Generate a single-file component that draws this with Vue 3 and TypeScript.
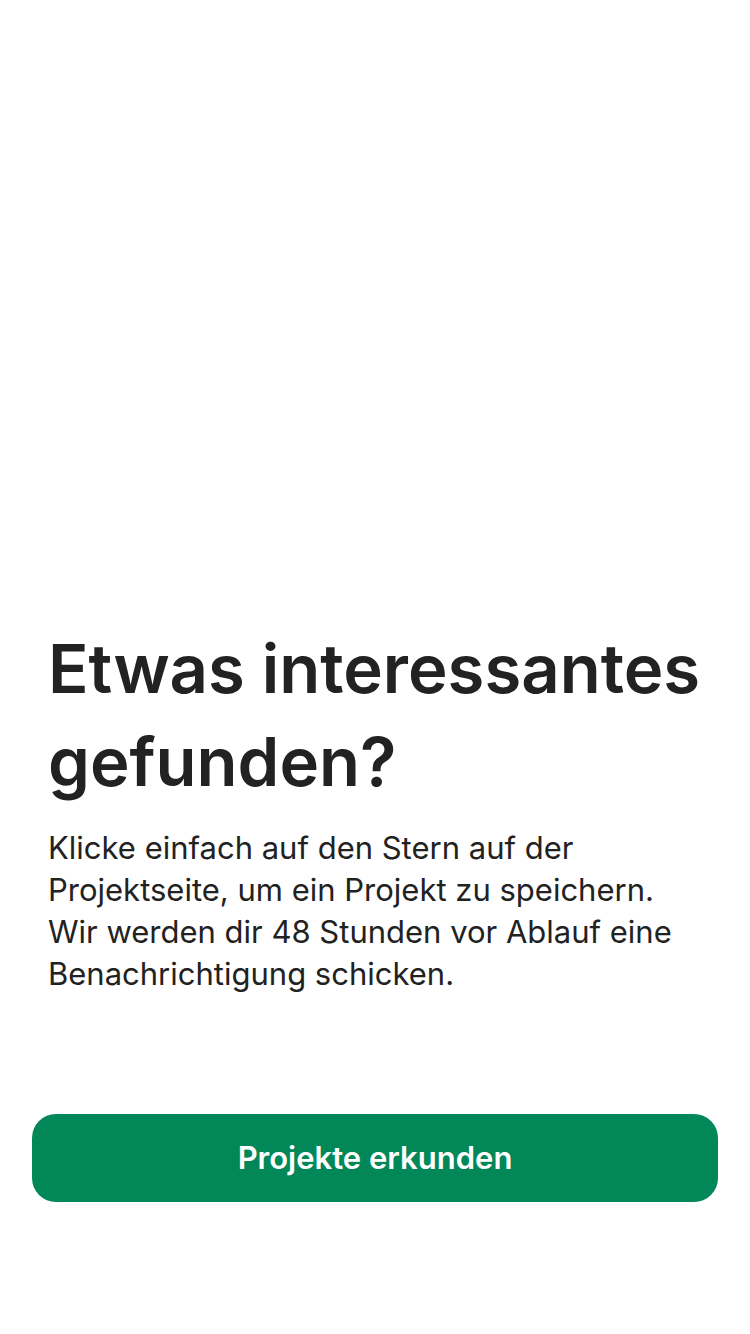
<script setup lang="ts">
const title: string = 'Etwas interessantes gefunden?'
const description: string =
  'Klicke einfach auf den Stern auf der Projektseite, um ein Projekt zu speichern. Wir werden dir 48 Stunden vor Ablauf eine Benachrichtigung schicken.'
</script>

<template>
  <main class="screen">
    <section class="message">
      <h1 class="title">{{ title }}</h1>
      <p class="description">{{ description }}</p>
    </section>
    <button class="action" type="button">Projekte erkunden</button>
  </main>
</template>

<style>
body {
  background: #ffffff;
}
</style>

<style scoped>
.screen {
  box-sizing: border-box;
  min-height: 100vh;
  display: flex;
  flex-direction: column;
  justify-content: flex-end;
  padding: 32px 32px 132px;
  font-family: Inter, "Liberation Sans", sans-serif;
  color: #222222;
  background: #ffffff;
}

.message {
  padding: 0 16px;
  margin-bottom: 119px;
}

.title {
  margin: 0 0 19px;
  font-size: 67px;
  line-height: 93px;
  font-weight: 600;
}

.description {
  margin: 0;
  font-size: 31px;
  line-height: 42px;
  font-weight: 400;
}

.action {
  width: 100%;
  height: 88px;
  padding: 0 24px;
  border: 0;
  border-radius: 24px;
  background: #028858;
  color: #ffffff;
  font-family: inherit;
  font-size: 31px;
  line-height: 40px;
  font-weight: 600;
  cursor: pointer;
}
</style>
